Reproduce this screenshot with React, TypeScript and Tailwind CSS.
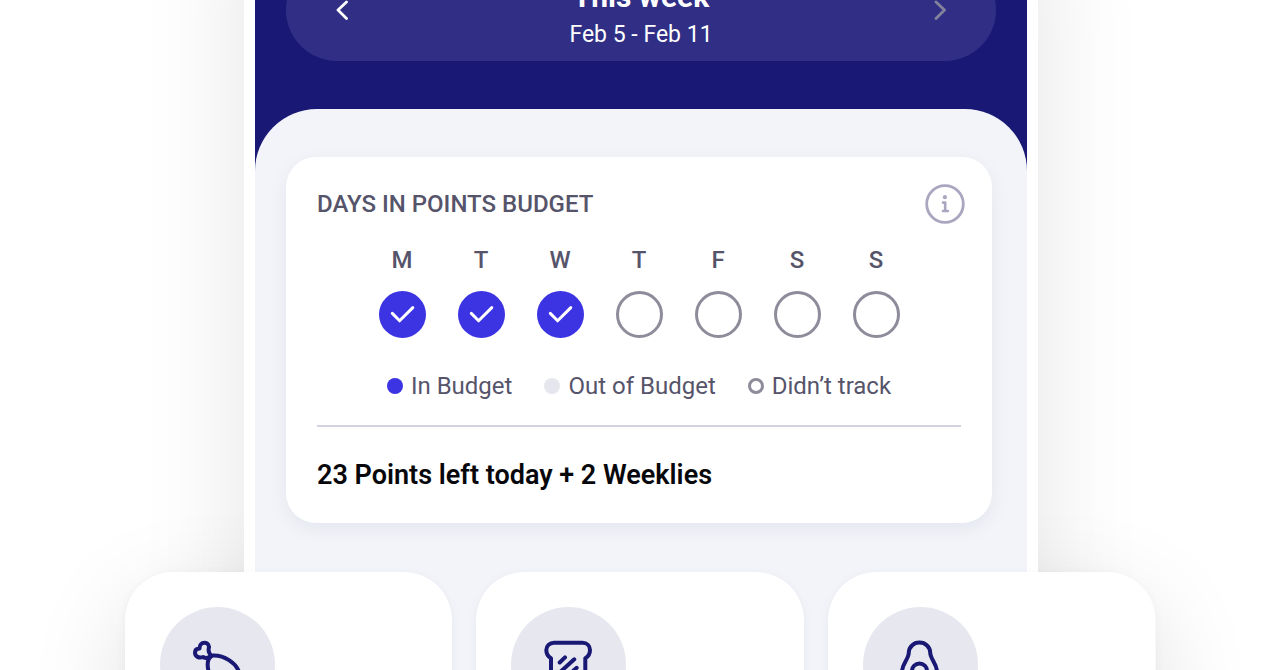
import React from 'react'

type Day = {
  label: string
  name: string
  tracked: boolean
}

const days: Day[] = [
  { label: 'M', name: 'Monday', tracked: true },
  { label: 'T', name: 'Tuesday', tracked: true },
  { label: 'W', name: 'Wednesday', tracked: true },
  { label: 'T', name: 'Thursday', tracked: false },
  { label: 'F', name: 'Friday', tracked: false },
  { label: 'S', name: 'Saturday', tracked: false },
  { label: 'S', name: 'Sunday', tracked: false },
]

const legend = [
  { text: 'In Budget', dot: 'bg-[#3c33e3]' },
  { text: 'Out of Budget', dot: 'bg-[#e6e6ef]' },
  { text: 'Didn’t track', dot: 'border-[3px] border-[#8d8c9b]' },
]

const Check = () => (
  <svg viewBox="0 0 47 47" className="w-full" fill="none" aria-hidden="true">
    <path
      d="M13.3 22.4 20.6 29.8 33.8 16.6"
      stroke="#fff"
      strokeWidth="3"
      strokeLinecap="round"
      strokeLinejoin="round"
    />
  </svg>
)

const InfoIcon = () => (
  <svg viewBox="0 0 40 40" className="w-10" fill="none" aria-hidden="true">
    <g stroke="#a9a7c0" strokeLinecap="round" strokeLinejoin="round">
      <circle cx="20" cy="20" r="18.3" strokeWidth="2.8" />
      <path d="M18 18.6H20.2V27M18 27H22.8" strokeWidth="2.6" />
    </g>
    <circle cx="19.9" cy="13.2" r="2.1" fill="#a9a7c0" />
  </svg>
)

const Chevron = ({ flip = false }: { flip?: boolean }) => (
  <svg viewBox="0 0 12 20" className="w-3" fill="none" aria-hidden="true">
    <path
      d={flip ? 'M2 2 10.5 10 2 18.5' : 'M10.5 2 2 10 10.5 18.5'}
      stroke={flip ? '#83839b' : '#fff'}
      strokeWidth="2.8"
      strokeLinecap="round"
      strokeLinejoin="round"
    />
  </svg>
)

const Drumstick = () => (
  <>
    <path d="M21.5 19.5C18.5 21.5 15.5 21 14 20C10 21.5 6 19.5 6 15.8C6 12.8 8 11.5 10.5 11.5C10.5 8 12.5 5.8 15.5 5.8C19 5.8 20.8 9 19.6 12.3C19.3 15 20.5 17 22.3 18.5" />
    <path d="M24 18.5C20 20 18.5 23.5 18.7 28C19 41 30 52 42 51C49 50 52 43 50 35C47 26 35 18 24 18.5Z" />
  </>
)

const Toast = () => (
  <>
    <path d="M13 5.8H41.5C46 5.8 49 9 49 13C49 17 47.5 19.5 44.3 21.2V46C44.3 48.5 42.5 50 40.3 50H14C11.5 50 10 48.5 10 46V21.2C7 19.5 5.3 17 5.3 13C5.3 9 8.5 5.8 13 5.8Z" />
    <path d="M18.7 25.5 24 20.4M18.7 35.5 33.3 22.3M24 41 35.7 30.8" />
  </>
)

const Avocado = () => (
  <>
    <path d="M27.5 5.5C21.5 5.5 17 10 16.8 15.5C16.6 22 11 26 10.2 33C9 43 17 51 27.5 51C38 51 46 43 44.8 33C44 26 38.4 22 38.2 15.5C38 10 33.5 5.5 27.5 5.5Z" />
    <circle cx="27.5" cy="34" r="7.5" />
  </>
)

const foods = [
  { name: 'Drumstick', Icon: Drumstick },
  { name: 'Toast', Icon: Toast },
  { name: 'Avocado', Icon: Avocado },
]

const WeekPicker = () => (
  <header className="px-[31px] pt-8 pb-12">
    <div className="flex items-center justify-between px-10 text-white rounded-full bg-[#302f85]">
      <button type="button" aria-label="Previous week" className="px-2.5 py-2">
        <Chevron />
      </button>
      <div className="pt-5 pb-2.5 text-center">
        <h1 className="text-[30px] leading-9 font-bold">This week</h1>
        <p className="mt-1 text-[23px] leading-8">Feb 5 - Feb 11</p>
      </div>
      <button type="button" aria-label="Next week" className="px-2.5 py-2">
        <Chevron flip />
      </button>
    </div>
  </header>
)

const BudgetCard = () => (
  <section className="px-[31px] pt-[27px] pb-[30px] bg-white rounded-[30px] shadow-[0_6px_20px_rgba(20,20,60,0.06)]">
    <div className="flex items-center justify-between -mr-1">
      <h2 className="text-2xl leading-8 font-medium text-[#56546a]">
        DAYS IN POINTS BUDGET
      </h2>
      <button type="button" aria-label="About points budget">
        <InfoIcon />
      </button>
    </div>
    <ul className="flex justify-center gap-8 mt-5">
      {days.map((day) => (
        <li key={day.name} className="w-[47px] text-center">
          <p className="mb-[15px] text-2xl leading-8 font-medium text-[#56546a]">
            {day.label}
          </p>
          <div
            className={
              day.tracked
                ? 'h-[47px] rounded-full bg-[#3c33e3]'
                : 'h-[47px] rounded-full border-[3px] border-[#8d8c9b]'
            }
          >
            {day.tracked && <Check />}
          </div>
        </li>
      ))}
    </ul>
    <ul className="flex flex-wrap justify-center gap-x-8 mt-8 text-2xl leading-8 text-[#56546a]">
      {legend.map((item) => (
        <li key={item.text} className="flex items-center gap-2">
          <span className={`size-4 rounded-full ${item.dot}`} />
          {item.text}
        </li>
      ))}
    </ul>
    <hr className="mt-[23px] border-t-2 border-[#d3d2e2]" />
    <p className="mt-[30px] text-[27px] leading-9 font-semibold text-[#08080c]">
      23 Points left today + 2 Weeklies
    </p>
  </section>
)

const App = () => {
  return (
    <main className="isolate overflow-hidden h-screen bg-white font-['Roboto','Liberation_Sans',sans-serif]">
      <div className="pl-0.5">
        <div className="mx-auto -mt-[73px] w-full max-w-[794px] px-[11px] bg-white shadow-[0_0_100px_rgba(0,0,0,0.11)]">
          <div className="bg-[#191875]">
            <WeekPicker />
            <div className="pt-12 pr-[35px] pb-[200px] pl-[31px] bg-[#f2f4f9] rounded-t-[62px]">
              <BudgetCard />
            </div>
          </div>
        </div>
      </div>
      <div className="relative mx-auto -mt-[151px] w-full max-w-[1031px]">
        <div className="absolute inset-0 -z-10 rounded-[48px] shadow-[0_30px_100px_rgba(0,0,0,0.12)]" />
        <ul className="relative grid grid-cols-3 gap-6">
          {foods.map(({ name, Icon }) => (
            <li
              key={name}
              className="px-[35px] pt-[35px] pb-48 bg-white rounded-[48px] shadow-[0_2px_10px_rgba(20,20,60,0.05)]"
            >
              <div className="flex justify-center items-center rounded-full size-[115px] bg-[#e7e7f0]">
                <svg
                  viewBox="0 0 56 56"
                  className="size-14"
                  fill="none"
                  stroke="#191875"
                  strokeWidth="4"
                  strokeLinecap="round"
                  strokeLinejoin="round"
                  role="img"
                  aria-label={name}
                >
                  <Icon />
                </svg>
              </div>
            </li>
          ))}
        </ul>
      </div>
    </main>
  )
}

export default App
